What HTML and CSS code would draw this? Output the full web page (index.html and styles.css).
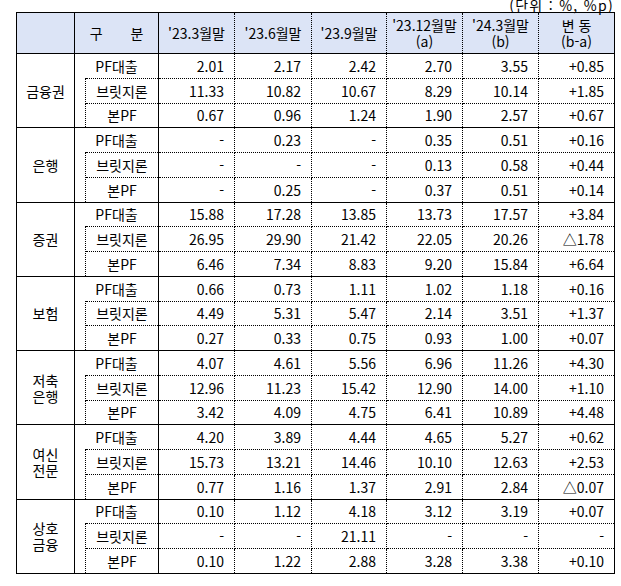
FILE: index.html
```html
<!DOCTYPE html>
<html lang="ko">
<head>
<meta charset="utf-8">
<link rel="stylesheet" href="styles.css">
</head>
<body>
<div class="page">
  <div class="unit">(단위 : %, %p)</div>
  <table class="tbl">
    <colgroup>
      <col class="c-grp"><col class="c-gap"><col class="c-sub">
      <col class="c3"><col class="c4"><col class="c5"><col class="c6"><col class="c7"><col class="c8">
    </colgroup>
    <thead>
      <tr>
        <th class="h-solid"></th>
        <th class="h-solid" colspan="2">구　　분</th>
        <th>'23.3월말</th>
        <th>'23.6월말</th>
        <th>'23.9월말</th>
        <th>'23.12월말<br>(a)</th>
        <th>'24.3월말<br>(b)</th>
        <th>변 동<br>(b-a)</th>
      </tr>
    </thead>
    <tbody>
      <tr class="g"><th class="grp" rowspan="3">금융권</th><td class="sub" colspan="2">PF대출</td><td>2.01</td><td>2.17</td><td>2.42</td><td>2.70</td><td>3.55</td><td>+0.85</td></tr>
      <tr><td class="gap" rowspan="2"></td><td class="sub2">브릿지론</td><td>11.33</td><td>10.82</td><td>10.67</td><td>8.29</td><td>10.14</td><td>+1.85</td></tr>
      <tr><td class="sub2">본PF</td><td>0.67</td><td>0.96</td><td>1.24</td><td>1.90</td><td>2.57</td><td>+0.67</td></tr>

      <tr class="g"><th class="grp" rowspan="3">은행</th><td class="sub" colspan="2">PF대출</td><td>-</td><td>0.23</td><td>-</td><td>0.35</td><td>0.51</td><td>+0.16</td></tr>
      <tr><td class="gap" rowspan="2"></td><td class="sub2">브릿지론</td><td>-</td><td>-</td><td>-</td><td>0.13</td><td>0.58</td><td>+0.44</td></tr>
      <tr><td class="sub2">본PF</td><td>-</td><td>0.25</td><td>-</td><td>0.37</td><td>0.51</td><td>+0.14</td></tr>

      <tr class="g"><th class="grp" rowspan="3">증권</th><td class="sub" colspan="2">PF대출</td><td>15.88</td><td>17.28</td><td>13.85</td><td>13.73</td><td>17.57</td><td>+3.84</td></tr>
      <tr><td class="gap" rowspan="2"></td><td class="sub2">브릿지론</td><td>26.95</td><td>29.90</td><td>21.42</td><td>22.05</td><td>20.26</td><td>△1.78</td></tr>
      <tr><td class="sub2">본PF</td><td>6.46</td><td>7.34</td><td>8.83</td><td>9.20</td><td>15.84</td><td>+6.64</td></tr>

      <tr class="g"><th class="grp" rowspan="3">보험</th><td class="sub" colspan="2">PF대출</td><td>0.66</td><td>0.73</td><td>1.11</td><td>1.02</td><td>1.18</td><td>+0.16</td></tr>
      <tr><td class="gap" rowspan="2"></td><td class="sub2">브릿지론</td><td>4.49</td><td>5.31</td><td>5.47</td><td>2.14</td><td>3.51</td><td>+1.37</td></tr>
      <tr><td class="sub2">본PF</td><td>0.27</td><td>0.33</td><td>0.75</td><td>0.93</td><td>1.00</td><td>+0.07</td></tr>

      <tr class="g"><th class="grp" rowspan="3">저축<br>은행</th><td class="sub" colspan="2">PF대출</td><td>4.07</td><td>4.61</td><td>5.56</td><td>6.96</td><td>11.26</td><td>+4.30</td></tr>
      <tr><td class="gap" rowspan="2"></td><td class="sub2">브릿지론</td><td>12.96</td><td>11.23</td><td>15.42</td><td>12.90</td><td>14.00</td><td>+1.10</td></tr>
      <tr><td class="sub2">본PF</td><td>3.42</td><td>4.09</td><td>4.75</td><td>6.41</td><td>10.89</td><td>+4.48</td></tr>

      <tr class="g"><th class="grp" rowspan="3">여신<br>전문</th><td class="sub" colspan="2">PF대출</td><td>4.20</td><td>3.89</td><td>4.44</td><td>4.65</td><td>5.27</td><td>+0.62</td></tr>
      <tr><td class="gap" rowspan="2"></td><td class="sub2">브릿지론</td><td>15.73</td><td>13.21</td><td>14.46</td><td>10.10</td><td>12.63</td><td>+2.53</td></tr>
      <tr><td class="sub2">본PF</td><td>0.77</td><td>1.16</td><td>1.37</td><td>2.91</td><td>2.84</td><td>△0.07</td></tr>

      <tr class="g"><th class="grp" rowspan="3">상호<br>금융</th><td class="sub" colspan="2">PF대출</td><td>0.10</td><td>1.12</td><td>4.18</td><td>3.12</td><td>3.19</td><td>+0.07</td></tr>
      <tr><td class="gap" rowspan="2"></td><td class="sub2">브릿지론</td><td>-</td><td>-</td><td>21.11</td><td>-</td><td>-</td><td>-</td></tr>
      <tr><td class="sub2">본PF</td><td>0.10</td><td>1.22</td><td>2.88</td><td>3.28</td><td>3.38</td><td>+0.10</td></tr>
    </tbody>
  </table>
</div>
</body>
</html>
```
FILE: styles.css
```css
html, body {
  margin: 0;
  padding: 0;
  background: #fff;
}
body {
  font-family: "Noto Sans CJK KR", "Noto Sans", sans-serif;
  color: #000;
  font-size: 14px;
}
.page {
  padding: 0 8px 0 16px;
  overflow: hidden;
  height: 586px;
}
.unit {
  font-size: 14px;
  line-height: 16px;
  height: 15px;
  margin-top: -3px;
  text-align: right;
  letter-spacing: 1.3px;
  padding-right: 0;
  margin-right: -1px;
}
.tbl {
  border-collapse: collapse;
  table-layout: fixed;
  width: 598px;
  border: 1px solid #000;
}
.c-grp { width: 58px; }
.c-gap { width: 11px; }
.c-sub { width: 73px; }
.c3 { width: 76px; }
.c4 { width: 77px; }
.c5 { width: 75px; }
.c6 { width: 76px; }
.c7 { width: 76px; }
.c8 { width: 76px; }

.tbl th, .tbl td {
  border: 1px dotted #000;
  padding: 0;
  font-weight: normal;
  white-space: nowrap;
}
.tbl thead th {
  background: #dce4f6;
  height: 40px;
  text-align: center;
  line-height: 16px;
  border-bottom: 1px solid #000;
  border-top: 1px solid #000;
}
.tbl thead th.h-solid {
  border-right: 1px solid #000;
}
.tbl tbody tr {
  height: 24.76px;
}
.tbl tbody td {
  text-align: right;
  padding-right: 10px;
  line-height: 18px;
}
.tbl tr.g > * {
  border-top: 1px solid #000;
}
.tbl .grp {
  text-align: center;
  vertical-align: middle;
  border-right: 1px solid #000;
  border-bottom: 1px solid #000;
  line-height: 16px;
}
.tbl td.sub {
  text-align: center;
  padding-right: 0;
  border-right: 1px solid #000;
  border-bottom: none;
}
.tbl td.sub2 {
  text-align: center;
  padding-right: 0;
  border-right: 1px solid #000;
  border-left: 1px dotted #000;
}
.tbl td.gap {
  padding: 0;
  border-top: none;
  border-right: 1px dotted #000;
  border-bottom: 1px solid #000;
}
```
